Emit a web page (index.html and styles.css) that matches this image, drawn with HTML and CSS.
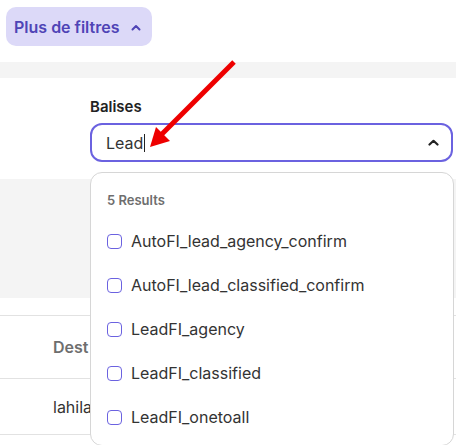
FILE: index.html
```html
<!DOCTYPE html>
<html lang="fr">
<head>
<meta charset="utf-8">
<link rel="stylesheet" href="styles.css">
</head>
<body>
<div class="page">
  <div class="topbar">
    <button class="more-btn">Plus de filtres
      <svg class="chev" width="10" height="7" viewBox="0 0 10 7"><path d="M1.5 5.5 L5 2 L8.5 5.5" fill="none" stroke="currentColor" stroke-width="2" stroke-linecap="round" stroke-linejoin="round"/></svg>
    </button>
  </div>
  <div class="band"></div>
  <div class="filters">
    <label class="label">Balises</label>
    <div class="input">
      <span class="value">Lead</span><span class="caret"></span>
      <svg class="input-chev" width="11" height="7" viewBox="0 0 11 7"><path d="M1.5 5.5 L5.5 1.8 L9.5 5.5" fill="none" stroke="#222" stroke-width="2.2" stroke-linecap="round" stroke-linejoin="round"/></svg>
    </div>
  </div>
  <div class="graybox"></div>
  <div class="spacer"></div>
  <div class="table">
    <div class="row head"><span class="cell">Dest</span></div>
    <div class="row"><span class="cell body">lahila</span></div>
  </div>

  <div class="dropdown">
    <div class="count">5 Results</div>
    <div class="opt"><span class="box"></span>AutoFI_lead_agency_confirm</div>
    <div class="opt"><span class="box"></span>AutoFI_lead_classified_confirm</div>
    <div class="opt"><span class="box"></span>LeadFI_agency</div>
    <div class="opt"><span class="box"></span>LeadFI_classified</div>
    <div class="opt"><span class="box"></span>LeadFI_onetoall</div>
  </div>

  <svg class="arrow" width="456" height="445" viewBox="0 0 456 445">
    <line x1="234" y1="62" x2="160" y2="136" stroke="#ee0000" stroke-width="5"/>
    <polygon points="150,147 156,127 170,141" fill="#ee0000"/>
  </svg>
</div>
</body>
</html>
```
FILE: styles.css
```css
html, body {
  margin: 0;
  padding: 0;
  background: #fff;
}
body {
  font-family: Inter, "Noto Sans", sans-serif;
  color: #222;
}
.page {
  position: relative;
  width: 456px;
  height: 445px;
  overflow: hidden;
}
.topbar {
  height: 62px;
  padding: 7px 0 0 6px;
  box-sizing: border-box;
}
.more-btn {
  display: flex;
  align-items: center;
  gap: 12px;
  height: 39px;
  padding: 0 11px 0 8px;
  border: none;
  border-radius: 10px;
  background: #dcd9f8;
  color: #4f44b6;
  font-family: Inter, sans-serif;
  font-size: 16px;
  font-weight: 600;
}
.chev {
  margin-top: 1px;
}
.band {
  height: 16px;
  background: #f4f4f4;
}
.filters {
  height: 101px;
  padding: 20px 3px 0 90px;
  box-sizing: border-box;
  display: flex;
  flex-direction: column;
}
.label {
  font-size: 15px;
  font-weight: 600;
  color: #222;
  line-height: 18px;
  margin-bottom: 7px;
}
.input {
  height: 39px;
  box-sizing: border-box;
  border: 2px solid #6b62e0;
  border-radius: 12px;
  display: flex;
  align-items: center;
  padding: 0 12px 0 14px;
}
.value {
  font-size: 16px;
  color: #333;
}
.caret {
  width: 1px;
  height: 18px;
  background: #222;
  margin-left: 1px;
}
.input-chev {
  margin-left: auto;
}
.graybox {
  height: 119px;
  background: #f4f4f4;
}
.spacer {
  height: 17px;
}
.table {
  border-top: 1px solid #e2e2e2;
}
.row {
  display: flex;
  align-items: center;
  height: 62px;
  border-bottom: 1px solid #e2e2e2;
  padding-left: 53px;
}
.row + .row {
  height: 55px;
}
.cell {
  font-size: 16px;
}
.head .cell {
  font-weight: 600;
  color: #6e6e6e;
}
.cell.body {
  color: #333;
}
.dropdown {
  position: absolute;
  left: 90px;
  top: 172px;
  width: 364px;
  height: 274px;
  box-sizing: border-box;
  background: #fff;
  border: 1px solid #d6d6d6;
  border-radius: 12px;
  padding: 19px 0 0 16px;
}
.count {
  font-size: 13px;
  font-weight: 600;
  color: #6e6e6e;
  line-height: 17px;
  margin-bottom: 10px;
}
.opt {
  display: flex;
  align-items: center;
  gap: 9px;
  height: 44px;
  font-size: 16px;
  color: #333;
}
.box {
  width: 13px;
  height: 13px;
  border: 1.5px solid #6b62e0;
  border-radius: 4px;
  flex: none;
}
.arrow {
  position: absolute;
  left: 0;
  top: 0;
  pointer-events: none;
}
```
